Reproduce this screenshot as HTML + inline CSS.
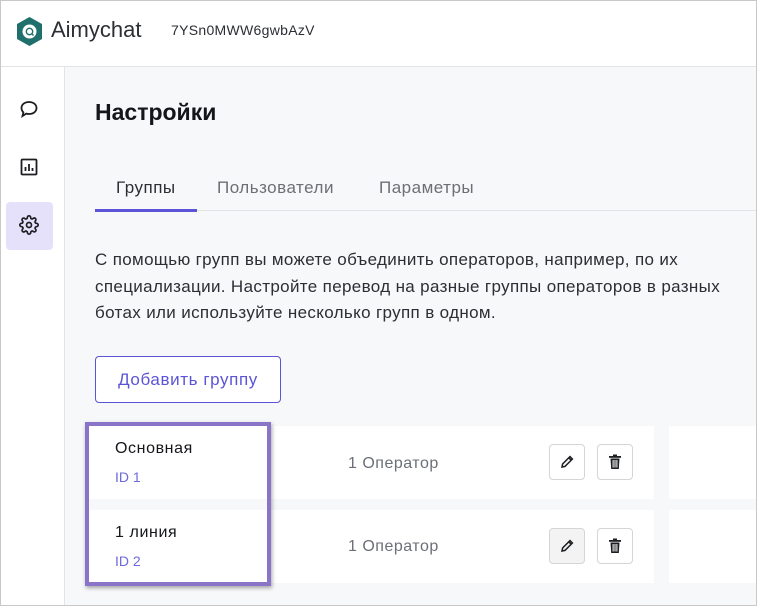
<!DOCTYPE html>
<html><head><meta charset="utf-8"><style>
*{box-sizing:border-box;margin:0;padding:0}
body{width:757px;height:606px;overflow:hidden;font-family:"Liberation Sans",sans-serif;background:#f7f8fa;position:relative}
.frame{position:absolute;inset:0;border:1px solid #c8c8c8;pointer-events:none;z-index:10}
.hdr{position:absolute;left:0;top:0;width:757px;height:67px;background:#fff;border-bottom:1px solid #e2e4e8}
.side{position:absolute;left:0;top:67px;width:65px;height:539px;background:#fff;border-right:1px solid #e2e4e8}
.abs{position:absolute}
.tab{position:absolute;top:178px;font-size:17px;color:#6b6f76;letter-spacing:.5px}
.row{position:absolute;background:#fff}
.btn{position:absolute;width:36px;height:36px;border:1px solid #d3d5d9;border-radius:4px;background:#fff;display:flex;align-items:center;justify-content:center}
</style></head><body>
<div class="hdr">
<svg class="abs" style="left:15px;top:16px" width="29" height="31" viewBox="0 0 29 31"><path d="M14.5 1 L27 8 V23 L14.5 30 L2 23 V8 Z" fill="#1f6f6c"/><circle cx="14.5" cy="15.5" r="7" fill="#fff"/><circle cx="14.5" cy="15.5" r="3.2" fill="none" stroke="#1f6f6c" stroke-width="1.4"/><path d="M16.5 17.5 L18.5 19.5" stroke="#1f6f6c" stroke-width="1.4"/></svg>
<div class="abs" style="left:51px;top:17px;font-size:22px;color:#2b2e33">Aimychat</div>
<div class="abs" style="left:171px;top:22px;font-size:14px;color:#2b2e33;letter-spacing:.3px">7YSn0MWW6gwbAzV</div>
</div>
<div class="side">
<svg class="abs" style="left:19px;top:32px" width="20" height="20" viewBox="0 0 20 20" fill="none" stroke="#1c1e22" stroke-width="1.8"><path d="M10 3c4.4 0 7.5 2.6 7.5 6s-3.1 6-7.5 6c-1 0-1.900-.1-2.7-.4L3.5 17l.9-3.6C3.2 12.2 2.5 10.7 2.5 9 2.5 5.6 5.6 3 10 3z"/></svg>
<svg class="abs" style="left:20px;top:91px" width="18" height="18" viewBox="0 0 18 18" fill="none" stroke="#1c1e22" stroke-width="1.8"><rect x="1.5" y="1.5" width="15" height="15" rx="1"/><path d="M5.5 13V9M9 13V6M12.5 13v-3"/></svg>
<div class="abs" style="left:6px;top:135px;width:47px;height:48px;background:#e5e1fb;border-radius:4px"></div>
<svg class="abs" style="left:19px;top:148px" width="20" height="20" viewBox="0 0 24 24" fill="none" stroke="#1c1e22" stroke-width="2"><circle cx="12" cy="12" r="3"/><path d="M19.4 15a1.65 1.65 0 0 0 .33 1.82l.06.06a2 2 0 1 1-2.830 2.83l-.06-.06a1.65 1.65 0 0 0-1.82-.33 1.65 1.65 0 0 0-1 1.51V21a2 2 0 1 1-4 0v-.09A1.65 1.65 0 0 0 9 19.4a1.65 1.65 0 0 0-1.82.33l-.06.06a2 2 0 1 1-2.83-2.83l.06-.06A1.65 1.65 0 0 0 4.68 15a1.65 1.65 0 0 0-1.51-1H3a2 2 0 1 1 0-4h.09A1.65 1.65 0 0 0 4.6 9a1.65 1.65 0 0 0-.33-1.82l-.06-.06a2 2 0 1 1 2.83-2.83l.06.06A1.65 1.65 0 0 0 9 4.68a1.65 1.65 0 0 0 1-1.51V3a2 2 0 1 1 4 0v.09a1.65 1.65 0 0 0 1 1.51 1.65 1.65 0 0 0 1.82-.33l.06-.06a2 2 0 1 1 2.83 2.83l-.06.06A1.65 1.65 0 0 0 19.4 9a1.65 1.65 0 0 0 1.51 1H21a2 2 0 1 1 0 4h-.09a1.65 1.65 0 0 0-1.51 1z"/></svg>
</div>
<div class="abs" style="left:95px;top:99px;font-size:23px;font-weight:bold;color:#14161a">Настройки</div>
<div class="tab" style="left:116px;color:#2b2e33">Группы</div>
<div class="tab" style="left:217px">Пользователи</div>
<div class="tab" style="left:379px">Параметры</div>
<div class="abs" style="left:95px;top:210px;width:662px;height:1px;background:#e2e4e8"></div>
<div class="abs" style="left:95px;top:209px;width:102px;height:3px;background:#5b54d6"></div>
<div class="abs" style="left:95px;top:247px;width:645px;font-size:17px;letter-spacing:.35px;line-height:26.5px;color:#2b2e33">С помощью групп вы можете объединить операторов, например, по их специализации. Настройте перевод на разные группы операторов в разных ботах или используйте несколько групп в одном.</div>
<div class="abs" style="left:95px;top:356px;width:186px;height:47px;border:1px solid #5b54d6;border-radius:4px;background:#fff;color:#5b54d6;font-size:17px;letter-spacing:.6px;display:flex;align-items:center;justify-content:center">Добавить группу</div>

<div class="row" style="left:88px;top:426px;width:566px;height:73px"></div>
<div class="row" style="left:669px;top:426px;width:88px;height:73px"></div>
<div class="row" style="left:88px;top:510px;width:566px;height:73px"></div>
<div class="row" style="left:669px;top:510px;width:88px;height:73px"></div>

<div class="abs" style="left:115px;top:440px;font-size:16px;letter-spacing:.6px;color:#14161a">Основная</div>
<div class="abs" style="left:115px;top:469px;font-size:14px;color:#6e69de">ID 1</div>
<div class="abs" style="left:115px;top:524px;font-size:16px;letter-spacing:.6px;color:#14161a">1 линия</div>
<div class="abs" style="left:115px;top:553px;font-size:14px;color:#6e69de">ID 2</div>
<div class="abs" style="left:348px;top:455px;font-size:16px;letter-spacing:.5px;color:#6b6f76">1 Оператор</div>
<div class="abs" style="left:348px;top:538px;font-size:16px;letter-spacing:.5px;color:#6b6f76">1 Оператор</div>

<div class="btn" style="left:549px;top:444px"><svg width="16" height="16" viewBox="0 0 16 16" fill="none" stroke="#1c1e22" stroke-width="1.5"><path d="M3 13l.6-3L11 2.6l2.4 2.4L6 12.4z M9.8 3.8l2.4 2.4"/></svg></div>
<div class="btn" style="left:597px;top:444px"><svg width="14" height="16" viewBox="0 0 14 16" fill="#1c1e22"><rect x="1" y="2" width="12" height="1.8"/><rect x="5" y="0.5" width="4" height="2"/><path d="M2.5 4.5h9l-.7 10.5H3.2z"/><g fill="#fff"><rect x="4.6" y="6" width="1" height="7.5"/><rect x="6.5" y="6" width="1" height="7.5"/><rect x="8.4" y="6" width="1" height="7.5"/></g></svg></div>
<div class="btn" style="left:549px;top:528px;background:#f3f3f4"><svg width="16" height="16" viewBox="0 0 16 16" fill="none" stroke="#1c1e22" stroke-width="1.5"><path d="M3 13l.6-3L11 2.6l2.4 2.4L6 12.4z M9.8 3.8l2.4 2.4"/></svg></div>
<div class="btn" style="left:597px;top:528px"><svg width="14" height="16" viewBox="0 0 14 16" fill="#1c1e22"><rect x="1" y="2" width="12" height="1.8"/><rect x="5" y="0.5" width="4" height="2"/><path d="M2.5 4.5h9l-.7 10.5H3.2z"/><g fill="#fff"><rect x="4.6" y="6" width="1" height="7.5"/><rect x="6.5" y="6" width="1" height="7.5"/><rect x="8.4" y="6" width="1" height="7.5"/></g></svg></div>

<div class="abs" style="left:85px;top:422px;width:186px;height:164px;border:4px solid #8a74c8;box-shadow:1px 2px 4px rgba(0,0,0,.35)"></div>
<div class="frame"></div>
</body></html>
